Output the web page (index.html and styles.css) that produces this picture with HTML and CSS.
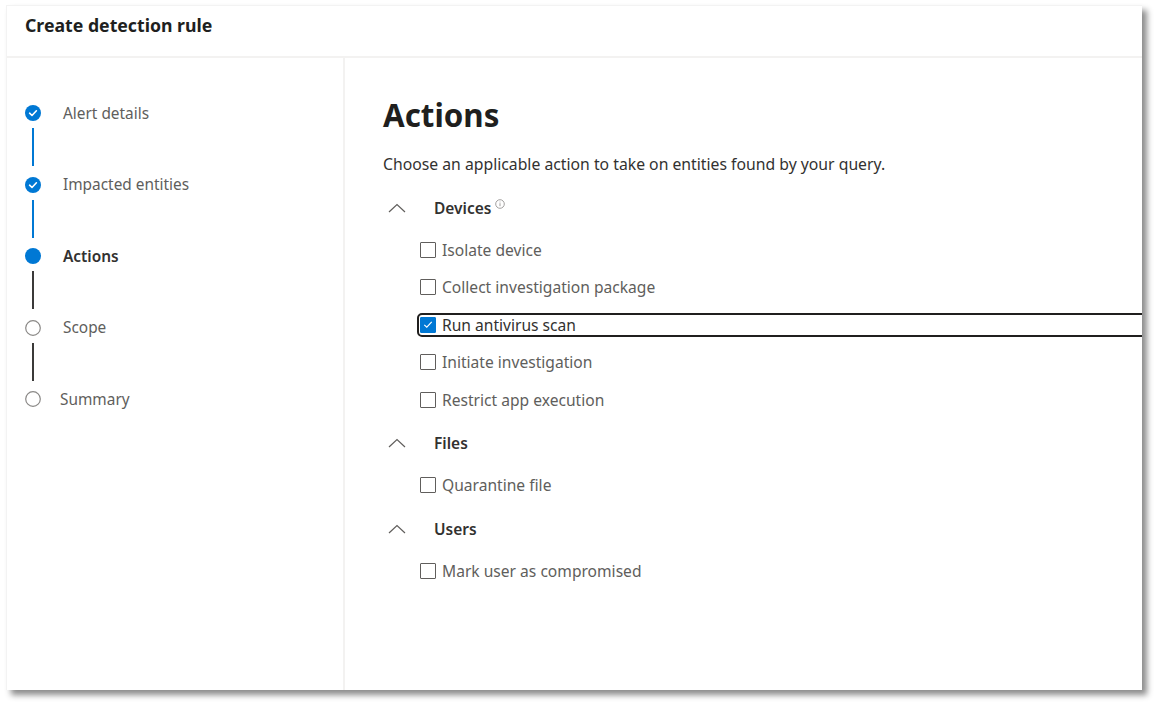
FILE: index.html
```html
<!DOCTYPE html>
<html>
<head>
<meta charset="utf-8">
<link rel="stylesheet" href="styles.css">
</head>
<body>
<div class="page">
  <div class="dialog">
    <div class="header"><h1 class="title">Create detection rule</h1></div>
    <div class="body">
      <nav class="steps">
        <div class="step done">
          <div class="step-row">
            <span class="dot"><svg width="16" height="16" viewBox="0 0 16 16"><circle cx="8" cy="8" r="8" fill="#0078d4"/><path d="M4.6 8.2 L7 10.5 L11.4 5.8" fill="none" stroke="#fff" stroke-width="1.6" stroke-linecap="round" stroke-linejoin="round"/></svg></span>
            <span class="step-label">Alert details</span>
          </div>
          <div class="connector blue"></div>
        </div>
        <div class="step done">
          <div class="step-row">
            <span class="dot"><svg width="16" height="16" viewBox="0 0 16 16"><circle cx="8" cy="8" r="8" fill="#0078d4"/><path d="M4.6 8.2 L7 10.5 L11.4 5.8" fill="none" stroke="#fff" stroke-width="1.6" stroke-linecap="round" stroke-linejoin="round"/></svg></span>
            <span class="step-label">Impacted entities</span>
          </div>
          <div class="connector blue"></div>
        </div>
        <div class="step current">
          <div class="step-row">
            <span class="dot"><svg width="16" height="16" viewBox="0 0 16 16"><circle cx="8" cy="8" r="8" fill="#0078d4"/></svg></span>
            <span class="step-label">Actions</span>
          </div>
          <div class="connector dark"></div>
        </div>
        <div class="step">
          <div class="step-row">
            <span class="dot"><svg width="16" height="16" viewBox="0 0 16 16"><circle cx="8" cy="8" r="7.3" fill="#fff" stroke="#8a8886" stroke-width="1.2"/></svg></span>
            <span class="step-label">Scope</span>
          </div>
          <div class="connector dark"></div>
        </div>
        <div class="step">
          <div class="step-row">
            <span class="dot"><svg width="16" height="16" viewBox="0 0 16 16"><circle cx="8" cy="8" r="7.3" fill="#fff" stroke="#8a8886" stroke-width="1.2"/></svg></span>
            <span class="step-label summary">Summary</span>
          </div>
        </div>
      </nav>
      <main class="content">
        <h2 class="heading">Actions</h2>
        <p class="desc">Choose an applicable action to take on entities found by your query.</p>

        <div class="group">
          <div class="group-head">
            <svg class="chev" width="18" height="10" viewBox="0 0 18 10"><path d="M1 9 L9 1.5 L17 9" fill="none" stroke="#605e5c" stroke-width="1.2"/></svg>
            <span class="group-label">Devices</span>
            <svg class="info" width="10" height="10" viewBox="0 0 10 10"><circle cx="5" cy="5" r="4.3" fill="none" stroke="#8a8886" stroke-width="0.8"/><rect x="4.6" y="4.2" width="0.8" height="3" fill="#8a8886"/><rect x="4.6" y="2.6" width="0.8" height="0.8" fill="#8a8886"/></svg>
          </div>
          <label class="check"><span class="box"></span><span class="check-label">Isolate device</span></label>
          <label class="check"><span class="box"></span><span class="check-label">Collect investigation package</span></label>
          <label class="check focused"><span class="box on"><svg width="15" height="15" viewBox="0 0 15 15"><path d="M3.5 7.8 L6.2 10.4 L11.5 4.6" fill="none" stroke="#fff" stroke-width="1.2"/></svg></span><span class="check-label">Run antivirus scan</span></label>
          <label class="check"><span class="box"></span><span class="check-label">Initiate investigation</span></label>
          <label class="check"><span class="box"></span><span class="check-label">Restrict app execution</span></label>
        </div>

        <div class="group">
          <div class="group-head">
            <svg class="chev" width="18" height="10" viewBox="0 0 18 10"><path d="M1 9 L9 1.5 L17 9" fill="none" stroke="#605e5c" stroke-width="1.2"/></svg>
            <span class="group-label">Files</span>
          </div>
          <label class="check"><span class="box"></span><span class="check-label">Quarantine file</span></label>
        </div>

        <div class="group">
          <div class="group-head">
            <svg class="chev" width="18" height="10" viewBox="0 0 18 10"><path d="M1 9 L9 1.5 L17 9" fill="none" stroke="#605e5c" stroke-width="1.2"/></svg>
            <span class="group-label">Users</span>
          </div>
          <label class="check"><span class="box"></span><span class="check-label">Mark user as compromised</span></label>
        </div>
      </main>
    </div>
  </div>
</div>
</body>
</html>
```

FILE: styles.css
```css
* { box-sizing: border-box; }
html, body { margin: 0; padding: 0; background: #fff; }
body {
  font-family: "Noto Sans", "Open Sans", sans-serif;
  color: #323130;
  width: 1161px;
  height: 709px;
  overflow: hidden;
}
.page {
  padding: 5px 0 0 6px;
}
.dialog {
  width: 1136px;
  height: 685px;
  background: #fff;
  border-top: 1px solid #f3f3f3;
  border-left: 1px solid #f3f3f3;
  box-shadow: 5px 5px 6px rgba(0,0,0,0.45);
  overflow: hidden;
  display: flex;
  flex-direction: column;
}
.header {
  height: 52px;
  border-bottom: 2px solid #f3f2f1;
  padding: 8px 0 0 18px;
  flex: none;
}
.title {
  margin: 0;
  font-size: 17.7px;
  font-weight: 700;
  color: #201f1e;
  line-height: 22px;
}
.body {
  flex: 1;
  display: flex;
}
.steps {
  width: 338px;
  flex: none;
  border-right: 2px solid #f3f2f1;
  padding: 47px 0 0 18px;
}
.step-row {
  display: flex;
  align-items: center;
  height: 16px;
}
.dot { width: 16px; height: 16px; display: block; flex: none; }
.dot svg { display: block; }
.step-label {
  margin-left: 22px;
  font-size: 15.4px;
  color: #605e5c;
  white-space: nowrap;
}
.step-label.summary { margin-left: 19px; }
.current .step-label { font-weight: 600; color: #323130; }
.connector {
  width: 2px;
  height: 38px;
  margin: 7px 0 10.5px 7px;
}
.connector.blue { background: #0078d4; }
.connector.dark { background: #3b3a39; }

.content {
  flex: 1;
  padding: 37px 0 0 38px;
  min-width: 0;
}
.heading {
  margin: 0;
  font-size: 31.3px;
  font-weight: 700;
  color: #201f1e;
  line-height: 40px;
}
.desc {
  margin: 19px 0 0;
  font-size: 15.75px;
  line-height: 20px;
  color: #323130;
}
.group-head {
  display: flex;
  align-items: center;
  height: 20px;
  margin-top: 23.5px;
}
.chev { margin-left: 5px; flex: none; }
.group-label {
  margin-left: 28px;
  font-size: 15.5px;
  font-weight: 600;
  color: #323130;
}
.info { margin-left: 4px; margin-top: -8px; }
.check {
  display: flex;
  align-items: center;
  height: 20px;
  margin-top: 17.5px;
  margin-left: 37px;
  width: 900px;
}
.group-head + .check { margin-top: 22px; }
.box {
  width: 16px;
  height: 16px;
  border: 1px solid #605e5c;
  border-radius: 1px;
  flex: none;
  display: flex;
  align-items: center;
  justify-content: center;
}
.box.on { background: #0078d4; border-color: #0078d4; }
.box svg { display: block; }
.check-label {
  margin-left: 6px;
  font-size: 15.6px;
  color: #605e5c;
  white-space: nowrap;
}
.focused {
  outline: 2px solid #201f1e;
  outline-offset: 0;
  border-radius: 3px;
  margin-left: 36px;
  padding-left: 1px;
}
.focused .check-label { color: #323130; }
```
